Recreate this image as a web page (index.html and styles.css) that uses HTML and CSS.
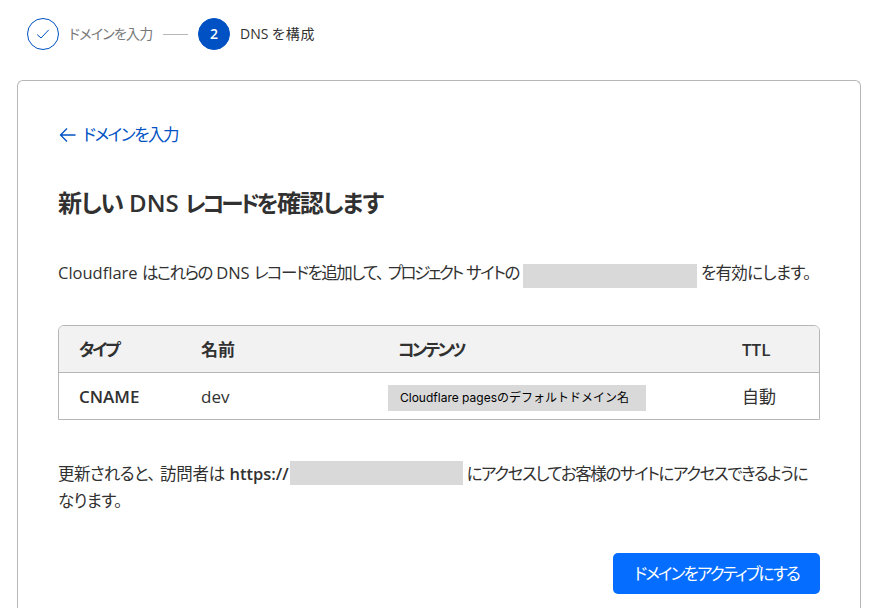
FILE: index.html
```
<!DOCTYPE html>
<html lang="ja">
<head>
  <meta charset="UTF-8">
  <meta name="viewport" content="width=device-width, initial-scale=1.0">
  <title>DNS を構成</title>
  <link rel="stylesheet" href="styles.css">
</head>
<body>
<div class="steps">
  <div class="step-icon done">
    <svg width="16" height="16" viewBox="0 0 16 16" fill="none" stroke="currentColor" stroke-width="1">
      <path d="M2.2 8.6 L6 12 L13.8 3.8"/>
    </svg>
  </div>
  <span class="step-label muted">ドメインを入力</span>
  <div class="step-line"></div>
  <div class="step-icon current">2</div>
  <span class="step-label">DNS <span class="step-ja">を構成</span></span>
</div>

<div class="card">
  <a class="back">
    <svg width="18" height="16" viewBox="0 0 18 16" fill="none" stroke="currentColor" stroke-width="1.3">
      <path d="M17.5 8 H2.5 M9 1.5 L2.5 8 L9 14.5"/>
    </svg>
    <span class="back-label">ドメインを入力</span>
  </a>

  <h1><span class="h-kanji">新しい</span> DNS <span class="h-kana">レコードを</span><span class="h-kanji">確認します</span></h1>

  <p class="description">Cloudflare <span class="kana">はこれらの</span> DNS <span class="kana">レコードを追加して<span class="comma">、</span></span><span class="katakana">プロジェクト</span> <span class="kana">サイトの</span><span class="mask mask-domain"></span><span class="mixed">を有効にします。</span></p>

  <table>
    <thead>
      <tr>
        <th class="col-type">タイプ</th>
        <th class="col-name">名前</th>
        <th class="col-content">コンテンツ</th>
        <th class="col-ttl">TTL</th>
      </tr>
    </thead>
    <tbody>
      <tr>
        <td class="type">CNAME</td>
        <td>dev</td>
        <td class="content"><span class="target">Cloudflare pagesのデフォルトドメイン名</span></td>
        <td>自動</td>
      </tr>
    </tbody>
  </table>

  <p class="note"><span class="mixed">更新されると<span class="comma">、</span></span><span class="visitor">訪問者は</span> <b>https://</b><span class="mask mask-url"></span><span class="access">にアクセスしてお客様のサイトにアクセスできるように</span><br><span class="mixed">なります。</span></p>

  <div class="actions">
    <button>ドメインをアクティブにする</button>
  </div>
</div>
</body>
</html>
```

FILE: styles.css
```
* {
  box-sizing: border-box;
}
body {
  font-family: "Open Sans", "Noto Sans CJK JP", sans-serif;
  font-size: 16.5px;
  font-feature-settings: "palt";
  color: #313131;
  background-color: white;
  margin: 0;
  padding: 18px 23px 0 17px;
}
.steps {
  display: flex;
  align-items: center;
  height: 32px;
  padding-left: 10px;
  font-size: 14px;
}
.step-icon {
  display: flex;
  align-items: center;
  justify-content: center;
  width: 32px;
  height: 32px;
  border-radius: 50%;
  border: 1px solid #0051c3;
  margin-right: 10px;
}
.done {
  color: #0051c3;
}
.current {
  background-color: #0051c3;
  color: white;
  font-weight: 600;
  padding-bottom: 1px;
}
.step-label {
  white-space: nowrap;
  padding-bottom: 2px;
}
.step-ja {
  letter-spacing: 0.8px;
}
.muted {
  color: #797979;
  width: 84px;
  letter-spacing: -0.8px;
}
.step-line {
  width: 25px;
  height: 1px;
  background-color: #b6b6b6;
  margin: 0 10px;
}
.card {
  margin-top: 30px;
  height: 528px;
  padding: 40px 40px 0;
  border: 1px solid #b6b6b6;
  border-bottom: none;
  border-radius: 6px 6px 0 0;
}
.back {
  display: flex;
  align-items: center;
  gap: 7px;
  height: 28px;
  color: #0051c3;
}
.back-label {
  letter-spacing: -1.4px;
  padding-bottom: 2px;
}
h1 {
  margin: 36px 0 0;
  font-size: 24px;
  font-weight: 600;
  line-height: 36px;
  white-space: nowrap;
}
.h-kana {
  font-size: 22.5px;
  letter-spacing: -3.2px;
}
.h-kanji {
  letter-spacing: -1.3px;
}
.h-kana + .h-kanji {
  margin-left: 2px;
}
p {
  margin: 0;
  line-height: 27px;
  white-space: nowrap;
}
.description {
  margin-top: 37px;
}
.kana {
  letter-spacing: -1.5px;
}
.katakana {
  letter-spacing: -2.4px;
}
.mixed {
  letter-spacing: -0.6px;
}
.visitor {
  letter-spacing: -0.2px;
}
.access {
  letter-spacing: -1.4px;
}
.comma {
  margin-right: 5px;
}
.mask {
  display: inline-block;
  height: 24px;
  background-color: #d9d9d9;
}
.mask-domain {
  width: 174px;
  margin: 0 4px -3px 4px;
  vertical-align: -6px;
}
.mask-url {
  width: 173px;
  margin: -3px 4px 0 1px;
  vertical-align: -5px;
}
table {
  width: 762px;
  margin-top: 39px;
  border: 1px solid #b6b6b6;
  border-radius: 6px 6px 0 0;
  border-spacing: 0;
  table-layout: fixed;
  overflow: hidden;
}
th, td {
  height: 46px;
  padding: 1px 0 0 20px;
  text-align: left;
  font-size: 17px;
  line-height: 24px;
}
th {
  height: 47px;
  background-color: #f2f2f2;
  border-bottom: 1px solid #b6b6b6;
  font-weight: 600;
}
.col-type {
  width: 122px;
  letter-spacing: -2.4px;
}
.col-name {
  width: 197px;
}
.col-content {
  width: 344px;
  letter-spacing: -2.8px;
}
.type {
  font-weight: 600;
}
.content {
  padding-left: 10px;
}
.target {
  display: block;
  width: 258px;
  height: 26px;
  padding-left: 12px;
  margin-top: 3px;
  background-color: #d9d9d9;
  color: black;
  font-family: Inter, "Noto Sans CJK JP", sans-serif;
  font-size: 12px;
  font-feature-settings: normal;
  line-height: 26px;
}
.note {
  margin-top: 40px;
}
.note b {
  font-weight: 600;
}
.actions {
  display: flex;
  justify-content: flex-end;
  margin-top: 39px;
}
button {
  width: 207px;
  height: 41px;
  padding: 0 0 1px;
  border: none;
  border-radius: 5px;
  background-color: #056dff;
  color: white;
  font-family: inherit;
  font-size: 16.5px;
  font-feature-settings: "palt";
  letter-spacing: -1.8px;
  cursor: pointer;
}
```
